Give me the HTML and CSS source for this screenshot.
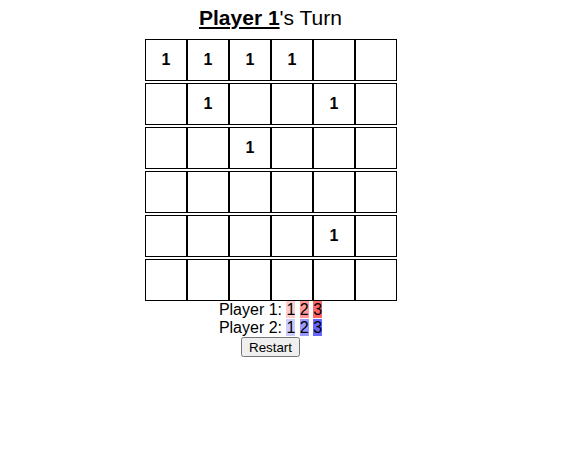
FILE: index.html
```html
<!DOCTYPE html>
<html>
<head>
<meta charset="utf-8">
<link rel="stylesheet" href="styles.css">
</head>
<body>
<div class="game">
  <div class="title"><span class="current">Player 1</span>'s Turn</div>
  <div class="board">
    <div class="cell">1</div><div class="cell">1</div><div class="cell">1</div><div class="cell">1</div><div class="cell"></div><div class="cell"></div>
    <div class="cell"></div><div class="cell">1</div><div class="cell"></div><div class="cell"></div><div class="cell">1</div><div class="cell"></div>
    <div class="cell"></div><div class="cell"></div><div class="cell">1</div><div class="cell"></div><div class="cell"></div><div class="cell"></div>
    <div class="cell"></div><div class="cell"></div><div class="cell"></div><div class="cell"></div><div class="cell"></div><div class="cell"></div>
    <div class="cell"></div><div class="cell"></div><div class="cell"></div><div class="cell"></div><div class="cell">1</div><div class="cell"></div>
    <div class="cell"></div><div class="cell"></div><div class="cell"></div><div class="cell"></div><div class="cell"></div><div class="cell"></div>
  </div>
  <div class="pieces">Player 1: <span class="p1 l1">1</span> <span class="p1 l2">2</span> <span class="p1 l3">3</span></div>
  <div class="pieces">Player 2: <span class="p2 l1">1</span> <span class="p2 l2">2</span> <span class="p2 l3">3</span></div>
  <button class="restart">Restart</button>
</div>
</body>
</html>
```

FILE: styles.css
```css
html, body {
  background: #fff;
}
body {
  margin: 8px;
  font-family: "Liberation Sans", Arial, sans-serif;
  color: #000;
}
.game {
  width: 525px;
  text-align: center;
}
.title {
  font-size: 21px;
  line-height: 24px;
  margin-top: -2px;
  margin-bottom: 9px;
}
.current {
  font-weight: bold;
  text-decoration: underline;
}
.board {
  display: grid;
  grid-template-columns: repeat(6, 42px);
  grid-auto-rows: 42px;
  row-gap: 2px;
  width: 252px;
  margin: 0 0 0 calc(50% - 125.5px);
}
.cell {
  box-sizing: border-box;
  border: 1px solid #000;
  display: flex;
  align-items: center;
  justify-content: center;
  font-weight: bold;
  font-size: 16px;
}
.pieces {
  font-size: 16px;
  line-height: 18px;
}
.p1.l1 { background: #ffcccc; }
.p1.l2 { background: #ff9999; }
.p1.l3 { background: #ff6666; }
.p2.l1 { background: #ccccff; }
.p2.l2 { background: #9999ff; }
.p2.l3 { background: #6666ff; }
.restart {
  font-family: "Liberation Sans", Arial, sans-serif;
  font-size: 13.333px;
  margin: 0;
  height: 20px;
  padding: 0 6px;
}
```
